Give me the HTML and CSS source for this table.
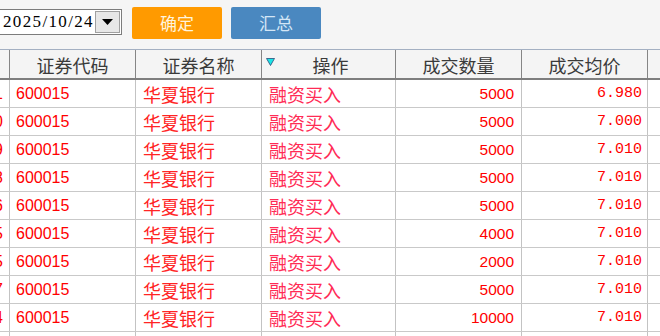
FILE: index.html
```html
<!DOCTYPE html>
<html lang="zh-CN">
<head>
<meta charset="utf-8">
<title>成交查询</title>
<link rel="stylesheet" href="styles.css">
</head>
<body>
<div class="toolbar">
  <div class="datebox">
    <span class="datetext">2025/10/24</span>
    <span class="dropbtn"><svg width="11" height="6" viewBox="0 0 11 6"><polygon points="0,0 11,0 5.5,6" fill="#000"/></svg></span>
  </div>
  <button class="btn btn-ok">确定</button>
  <button class="btn btn-sum">汇总</button>
</div>
<div class="grid">
  <div class="row hdr">
    <div class="c c0"></div>
    <div class="c hc">证券代码</div>
    <div class="c hc">证券名称</div>
    <div class="c hc op"><svg class="sorticon" width="9" height="8" viewBox="0 0 9 8"><polygon points="0.5,0.5 8.5,0.5 4.5,7.5" fill="#19e6e6" stroke="#2a4a7a" stroke-width="0.8"/></svg>操作</div>
    <div class="c hc">成交数量</div>
    <div class="c hc">成交均价</div>
    <div class="c last"></div>
  </div>
  <div class="row"><div class="c c0 idx">41</div><div class="c code">600015</div><div class="c name">华夏银行</div><div class="c act">融资买入</div><div class="c num">5000</div><div class="c price">6.980</div><div class="c last"></div></div>
  <div class="row"><div class="c c0 idx">40</div><div class="c code">600015</div><div class="c name">华夏银行</div><div class="c act">融资买入</div><div class="c num">5000</div><div class="c price">7.000</div><div class="c last"></div></div>
  <div class="row"><div class="c c0 idx">39</div><div class="c code">600015</div><div class="c name">华夏银行</div><div class="c act">融资买入</div><div class="c num">5000</div><div class="c price">7.010</div><div class="c last"></div></div>
  <div class="row"><div class="c c0 idx">38</div><div class="c code">600015</div><div class="c name">华夏银行</div><div class="c act">融资买入</div><div class="c num">5000</div><div class="c price">7.010</div><div class="c last"></div></div>
  <div class="row"><div class="c c0 idx">36</div><div class="c code">600015</div><div class="c name">华夏银行</div><div class="c act">融资买入</div><div class="c num">5000</div><div class="c price">7.010</div><div class="c last"></div></div>
  <div class="row"><div class="c c0 idx">35</div><div class="c code">600015</div><div class="c name">华夏银行</div><div class="c act">融资买入</div><div class="c num">4000</div><div class="c price">7.010</div><div class="c last"></div></div>
  <div class="row"><div class="c c0 idx">25</div><div class="c code">600015</div><div class="c name">华夏银行</div><div class="c act">融资买入</div><div class="c num">2000</div><div class="c price">7.010</div><div class="c last"></div></div>
  <div class="row"><div class="c c0 idx">17</div><div class="c code">600015</div><div class="c name">华夏银行</div><div class="c act">融资买入</div><div class="c num">5000</div><div class="c price">7.010</div><div class="c last"></div></div>
  <div class="row"><div class="c c0 idx">14</div><div class="c code">600015</div><div class="c name">华夏银行</div><div class="c act">融资买入</div><div class="c num">10000</div><div class="c price">7.010</div><div class="c last"></div></div>
  <div class="row"><div class="c c0"></div><div class="c"></div><div class="c"></div><div class="c"></div><div class="c"></div><div class="c"></div><div class="c last"></div></div>
</div>
</body>
</html>
```
FILE: styles.css
```css
* { box-sizing: border-box; }
html, body { margin: 0; padding: 0; }
body {
  width: 660px;
  height: 336px;
  overflow: hidden;
  background: #f5f5f5;
  font-family: "Liberation Sans", "Noto Sans CJK SC", sans-serif;
}
.toolbar {
  height: 49px;
  display: flex;
  align-items: flex-start;
  padding-top: 7px;
}
.datebox {
  margin-top: 2px;
  margin-left: -1px;
  width: 123px;
  height: 26px;
  background: #fff;
  border: 1px solid #7c7c7c;
  display: flex;
  align-items: center;
  justify-content: space-between;
  padding: 0 1px 0 3px;
}
.datetext {
  font-family: "Liberation Serif", serif;
  font-size: 17px;
  letter-spacing: 1.35px;
  color: #000;
  line-height: 22px;
}
.dropbtn {
  width: 25px;
  height: 22px;
  background: #e7e7e7;
  border: 1px solid #a0a0a0;
  display: flex;
  align-items: center;
  justify-content: center;
}
.btn {
  width: 90px;
  height: 32px;
  border: none;
  border-radius: 2px;
  font-family: "Noto Sans CJK SC", sans-serif;
  font-size: 17px;
  padding: 0;
  line-height: 32px;
}
.btn-ok { margin-left: 10px; background: #ff9a00; color: #fff4dc; }
.btn-sum { margin-left: 9px; background: #4a88c0; color: #d4e6f6; }

.grid { display: flex; flex-direction: column; }
.row {
  display: grid;
  grid-template-columns: 10px 126px 126px 134px 126px 126px 1fr;
  height: 28px;
  border-bottom: 1px solid #c9c9c9;
  background: #fff;
}
.row.hdr {
  height: 31px;
  border-top: 1px solid #a4b0c2;
  border-bottom: 2px solid #7e7e7e;
  background: #f4f4f4;
}
.c {
  border-right: 1px solid #c3c3c3;
  overflow: hidden;
  white-space: nowrap;
  display: flex;
  align-items: center;
  color: #ff0000;
  font-size: 16px;
}
.hdr .c { border-right-color: #858585; }
.c.last { border-right: none; }
.hc {
  justify-content: center;
  font-family: "Noto Sans CJK SC", sans-serif;
  font-size: 18px;
  color: #3a3a3a;
  padding-top: 1px;
}
.op { position: relative; padding-left: 4px; }
.sorticon { position: absolute; left: 4px; top: 8px; }
.idx {
  justify-content: flex-end;
  padding-right: 6px;
  font-size: 16px;
}
.code { padding-left: 6px; font-family: "Liberation Sans", sans-serif; }
.name, .act {
  padding-left: 7px;
  font-family: "Noto Sans CJK SC", sans-serif;
  font-size: 18px;
  color: #ff2424;
}
.act { color: #ff2b55; }
.num {
  justify-content: flex-end;
  padding-right: 7px;
  font-size: 15.5px;
}
.price {
  justify-content: flex-end;
  padding-right: 5px;
  font-family: "Liberation Mono", monospace;
  font-size: 15px;
}
```
